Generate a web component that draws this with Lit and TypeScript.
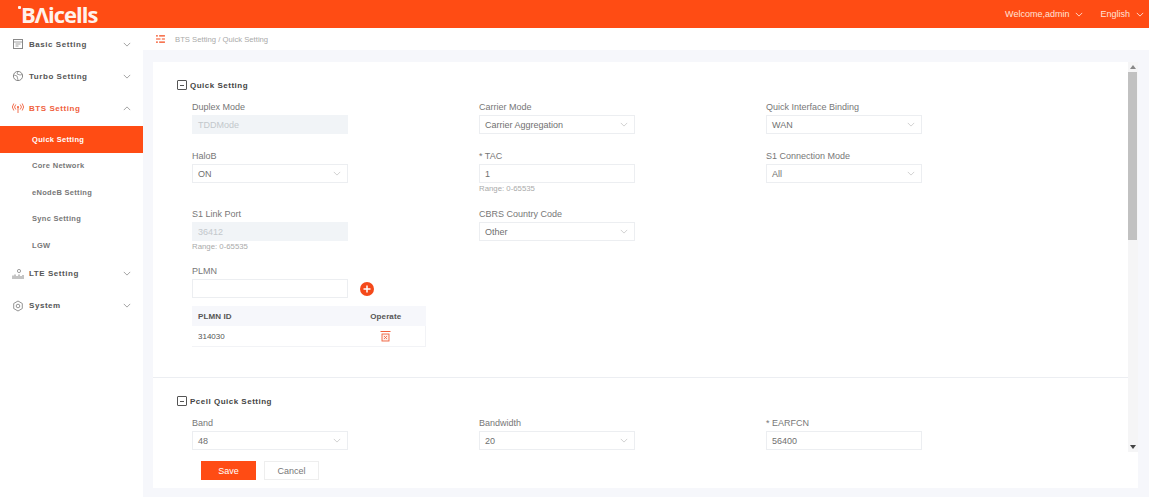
import { LitElement, html, css, svg } from 'lit';
import { customElement } from 'lit/decorators.js';

const chevron = (up = false) => html`<svg class="chev" viewBox="0 0 10 6" width="8" height="5">
  <path d=${up ? 'M1 5l4-4 4 4' : 'M1 1l4 4 4-4'} fill="none" stroke="currentColor" stroke-width="1.1"/>
</svg>`;

const icons: Record<string, unknown> = {
  basic: svg`<rect x="1.5" y="1.5" width="9" height="9" fill="none" stroke="currentColor"/><path d="M1.5 4h9M3.5 6h5M3.5 8h3" stroke="currentColor" stroke-width=".8"/>`,
  turbo: svg`<circle cx="6" cy="6" r="4.6" fill="none" stroke="currentColor"/><path d="M2 5l3 1 1 4M6 1.5L5 4l3 1 2.5-.5" fill="none" stroke="currentColor" stroke-width=".8"/>`,
  bts: svg`<circle cx="6" cy="5" r="1" fill="currentColor"/><path d="M6 5v6M3.8 2.5a3.5 3.5 0 000 5M8.2 2.5a3.5 3.5 0 010 5M1.8 1.5a5.5 5.5 0 000 7M10.2 1.5a5.5 5.5 0 010 7" fill="none" stroke="currentColor" stroke-width=".9"/>`,
  lte: svg`<circle cx="7" cy="3" r="1.6" fill="none" stroke="currentColor" stroke-width=".8"/><path d="M1 11V7.5M3 11V6.5M5 11V8M7 11V6.5M9 11V8M11 11V7" stroke="currentColor"/>`,
  system: svg`<path d="M6 1l4.3 2.5v5L6 11 1.7 8.500v-5z" fill="none" stroke="currentColor" stroke-width=".9"/><circle cx="6" cy="6" r="1.8" fill="none" stroke="currentColor" stroke-width=".9"/>`,
};

const sideIcon = (name: string) =>
  html`<svg class="side-icon" viewBox="0 0 12 12" width="12" height="12">${icons[name]}</svg>`;

interface Field {
  label: string;
  value?: string;
  kind: 'select' | 'input' | 'disabled';
  hint?: string;
  required?: boolean;
}

const quickRows: (Field | null)[][] = [
  [
    { label: 'Duplex Mode', value: 'TDDMode', kind: 'disabled' },
    { label: 'Carrier Mode', value: 'Carrier Aggregation', kind: 'select' },
    { label: 'Quick Interface Binding', value: 'WAN', kind: 'select' },
  ],
  [
    { label: 'HaloB', value: 'ON', kind: 'select' },
    { label: 'TAC', value: '1', kind: 'input', hint: 'Range: 0-65535', required: true },
    { label: 'S1 Connection Mode', value: 'All', kind: 'select' },
  ],
  [
    { label: 'S1 Link Port', value: '36412', kind: 'disabled', hint: 'Range: 0-65535' },
    { label: 'CBRS Country Code', value: 'Other', kind: 'select' },
    null,
  ],
];

const pcellRow: Field[] = [
  { label: 'Band', value: '48', kind: 'select' },
  { label: 'Bandwidth', value: '20', kind: 'select' },
  { label: 'EARFCN', value: '56400', kind: 'input', required: true },
];

@customElement('app-root')
export class AppRoot extends LitElement {
  static styles = css`
    :host {
      display: block;
      width: 1149px;
      height: 497px;
      overflow: hidden;
      font-family: 'Liberation Sans', Arial, sans-serif;
      font-size: 9px;
      color: #666;
      background: #f6f7fb;
    }
    .header {
      height: 28px;
      background: #ff4c14;
      color: #fff;
      display: flex;
      align-items: center;
      justify-content: space-between;
      padding: 0 5px 0 21px;
    }
    .logo {
      position: relative;
      font-family: 'Open Sans', sans-serif;
      font-weight: 700;
      font-size: 22px;
      letter-spacing: -1px;
      line-height: 28px;
      color: #fff2ec;
    }
    .logo::before {
      content: '';
      position: absolute;
      left: -3px;
      top: 6px;
      width: 3px;
      height: 3px;
      border-radius: 1px;
      background: #fff2ec;
    }
    .header-right {
      display: flex;
      gap: 17px;
      font-size: 9px;
      color: #ffe3d8;
    }
    .header-right span {
      display: flex;
      align-items: center;
      gap: 6px;
    }
    .body {
      display: flex;
      height: 469px;
    }
    .sidebar {
      width: 143px;
      flex: none;
      box-sizing: border-box;
      padding-top: 1px;
      background: #fff;
      display: flex;
      flex-direction: column;
    }
    .group {
      height: 30px;
      margin-bottom: 2px;
      flex: none;
      display: flex;
      align-items: center;
      padding: 0 12px;
      gap: 5px;
      font-size: 8px;
      font-weight: 700;
      letter-spacing: 0.55px;
      color: #555;
    }
    .group .name {
      flex: 1;
    }
    .group .chev {
      color: #999;
    }
    .group.open {
      margin-bottom: 3px;
    }
    .group.open,
    .group.open .side-icon {
      color: #f0603c;
    }
    .side-icon {
      color: #888;
      flex: none;
    }
    .sub {
      height: 26.5px;
      flex: none;
      display: flex;
      align-items: center;
      padding-left: 32px;
      font-size: 7.5px;
      font-weight: 700;
      letter-spacing: 0.3px;
      color: #777;
    }
    .sub.active {
      background: #ff4c14;
      color: #fff;
    }
    .main {
      flex: 1;
      display: flex;
      flex-direction: column;
      min-width: 0;
    }
    .crumb {
      height: 22px;
      flex: none;
      background: #fff;
      display: flex;
      align-items: center;
      gap: 10px;
      padding-left: 13px;
      font-size: 7.7px;
      color: #aaa;
    }
    .card {
      margin: 12px 11px 9px 10px;
      flex: 1;
      background: #fff;
      display: flex;
      flex-direction: column;
      min-height: 0;
    }
    .scroll-row {
      flex: 1;
      display: flex;
      min-height: 0;
    }
    .scroll {
      flex: 1;
      overflow: hidden;
      min-width: 0;
    }
    .section {
      padding: 17px 0 0 24px;
    }
    .section.first {
      height: 316px;
      border-bottom: 1px solid #eceef2;
      box-sizing: border-box;
    }
    .section-title {
      display: flex;
      align-items: center;
      gap: 3px;
      height: 12px;
      font-size: 8px;
      font-weight: 700;
      letter-spacing: 0.5px;
      color: #444;
    }
    .toggle {
      width: 8px;
      height: 8px;
      border: 1px solid #555;
      border-radius: 1px;
      display: flex;
      align-items: center;
      justify-content: center;
    }
    .toggle::after {
      content: '';
      width: 4px;
      height: 1px;
      background: #555;
    }
    .rows {
      margin: 10px 0 0 15px;
      display: flex;
      flex-direction: column;
    }
    .row {
      display: grid;
      grid-template-columns: repeat(3, 287px);
    }
    .row + .row {
      margin-top: 14px;
    }
    .field {
      width: 156px;
      min-height: 35px;
    }
    .field.hinted {
      min-height: 44px;
    }
    .label {
      height: 14px;
      line-height: 12px;
      color: #777;
    }
    .box {
      height: 19px;
      box-sizing: border-box;
      border: 1px solid #eceef1;
      display: flex;
      align-items: center;
      justify-content: space-between;
      padding: 0 6px 0 5px;
      color: #707070;
      background: #fff;
    }
    .box .chev {
      color: #ccc;
    }
    .box.disabled {
      background: #f1f4f7;
      border-color: #f1f4f7;
      color: #c3c8cc;
    }
    .hint {
      font-size: 7.8px;
      color: #aaa;
      line-height: 10px;
      margin-top: 1px;
    }
    .plmn {
      margin-top: 13px;
    }
    .plmn-input {
      display: flex;
      align-items: center;
      gap: 12px;
    }
    .plmn-input .box {
      width: 156px;
    }
    .add {
      width: 14px;
      height: 14px;
      border-radius: 50%;
      background: #f4491a;
      color: #fff;
      display: flex;
      align-items: center;
      justify-content: center;
    }
    table {
      margin-top: 8px;
      width: 234px;
      border-collapse: collapse;
      font-size: 8px;
    }
    th {
      height: 20px;
      padding: 0;
      background: #f6f7fb;
      font-weight: 700;
      color: #555;
      letter-spacing: 0.1px;
    }
    td {
      height: 20px;
      padding: 0;
      color: #555;
      border-bottom: 1px solid #f2f3f6;
    }
    th:first-child,
    td:first-child {
      text-align: left;
      padding-left: 6px;
      width: 148px;
    }
    td:last-child {
      text-align: center;
      border-right: 1px solid #f2f3f6;
    }
    td svg {
      display: block;
      margin: 0 auto;
    }
    .scrollbar {
      width: 10px;
      flex: none;
      background: #f5f5f6;
      display: flex;
      flex-direction: column;
    }
    .arrow {
      height: 10px;
      flex: none;
      display: flex;
      align-items: center;
      justify-content: center;
    }
    .thumb {
      width: 9px;
      height: 168px;
      background: #c1c1c1;
    }
    .spacer {
      flex: 1;
    }
    .footer {
      height: 36px;
      flex: none;
      display: flex;
      gap: 8px;
      padding: 9px 0 0 48px;
      box-sizing: border-box;
    }
    .btn {
      width: 55px;
      height: 19px;
      box-sizing: border-box;
      display: flex;
      align-items: center;
      justify-content: center;
      font-size: 9px;
    }
    .btn.save {
      background: #ff4c14;
      color: #fff;
    }
    .btn.cancel {
      border: 1px solid #eee;
      color: #777;
    }
  `;

  private renderField(f: Field | null) {
    if (!f) return html`<div></div>`;
    return html`<div class="field ${f.hint ? 'hinted' : ''}">
      <div class="label">${f.required ? '* ' : ''}${f.label}</div>
      <div class="box ${f.kind === 'disabled' ? 'disabled' : ''}">
        <span>${f.value}</span>
        ${f.kind === 'select' ? chevron() : ''}
      </div>
      ${f.hint ? html`<div class="hint">${f.hint}</div>` : ''}
    </div>`;
  }

  private renderGroup(name: string, icon: string, open = false) {
    return html`<div class="group ${open ? 'open' : ''}">
      ${sideIcon(icon)}<span class="name">${name}</span>${chevron(open)}
    </div>`;
  }

  render() {
    return html`
      <div class="header">
        <div class="logo">BΛicells</div>
        <div class="header-right">
          <span>Welcome,admin ${chevron()}</span>
          <span>English ${chevron()}</span>
        </div>
      </div>
      <div class="body">
        <nav class="sidebar">
          ${this.renderGroup('Basic Setting', 'basic')}
          ${this.renderGroup('Turbo Setting', 'turbo')}
          ${this.renderGroup('BTS Setting', 'bts', true)}
          <div class="sub active">Quick Setting</div>
          <div class="sub">Core Network</div>
          <div class="sub">eNodeB Setting</div>
          <div class="sub">Sync Setting</div>
          <div class="sub">LGW</div>
          ${this.renderGroup('LTE Setting', 'lte')}
          ${this.renderGroup('System', 'system')}
        </nav>
        <div class="main">
          <div class="crumb">
            <svg viewBox="0 0 10 9" width="9" height="8">
              <path d="M0 1h2M3.500 1H10M0 4.500h5M6.500 4.500H10M0 8h2M3.500 8H10" stroke="#f4491a" stroke-width="1.300"/>
            </svg>
            <span>BTS Setting / Quick Setting</span>
          </div>
          <div class="card">
            <div class="scroll-row">
              <div class="scroll">
                <div class="section first">
                  <div class="section-title"><span class="toggle"></span>Quick Setting</div>
                  <div class="rows">
                    ${quickRows.map(
                      (r) => html`<div class="row">${r.map((f) => this.renderField(f))}</div>`
                    )}
                  </div>
                  <div class="rows plmn">
                    <div class="label">PLMN</div>
                    <div class="plmn-input">
                      <div class="box"></div>
                      <div class="add">
                        <svg viewBox="0 0 8 8" width="8" height="8">
                          <path d="M4 0.500v7M0.500 4h7" stroke="#fff" stroke-width="1.500"/>
                        </svg>
                      </div>
                    </div>
                    <table>
                      <tr><th>PLMN ID</th><th>Operate</th></tr>
                      <tr>
                        <td>314030</td>
                        <td>
                          <svg viewBox="0 0 11 11" width="11" height="11">
                            <path d="M0.500 0.500h10" stroke="#f0603c"/>
                            <rect x="2" y="3" width="7" height="7" fill="#fdeee9" stroke="#f0603c" stroke-width=".9"/>
                            <path d="M4 5l3 3M7 5l-3 3" stroke="#f0603c" stroke-width=".8"/>
                          </svg>
                        </td>
                      </tr>
                    </table>
                  </div>
                </div>
                <div class="section">
                  <div class="section-title"><span class="toggle"></span>Pcell Quick Setting</div>
                  <div class="rows">
                    <div class="row">${pcellRow.map((f) => this.renderField(f))}</div>
                  </div>
                </div>
              </div>
              <div class="scrollbar">
                <div class="arrow">
                  <svg viewBox="0 0 6 4" width="6" height="4"><path d="M3 0l3 4H0z" fill="#888"/></svg>
                </div>
                <div class="thumb"></div>
                <div class="spacer"></div>
                <div class="arrow">
                  <svg viewBox="0 0 6 4" width="6" height="4"><path d="M3 4L0 0h6z" fill="#444"/></svg>
                </div>
              </div>
            </div>
            <div class="footer">
              <div class="btn save">Save</div>
              <div class="btn cancel">Cancel</div>
            </div>
          </div>
        </div>
      </div>
    `;
  }
}
